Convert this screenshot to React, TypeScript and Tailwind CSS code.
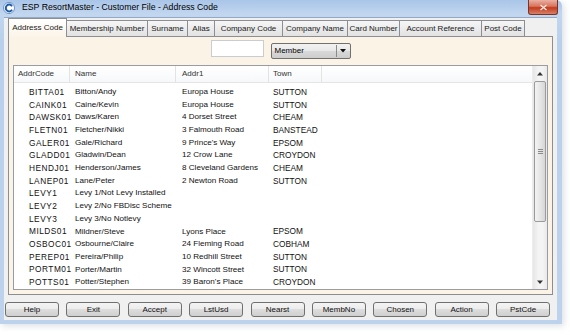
import React from "react";

const tabs: { label: string; w: number }[] = [
  { label: "Address Code", w: 59 },
  { label: "Membership Number", w: 81 },
  { label: "Surname", w: 40 },
  { label: "Alias", w: 27 },
  { label: "Company Code", w: 68 },
  { label: "Company Name", w: 65 },
  { label: "Card Number", w: 52 },
  { label: "Account Reference", w: 82 },
  { label: "Post Code", w: 43 },
];

const rows: [string, string, string, string][] = [
  ["BITTA01", "Bitton/Andy", "Europa House", "SUTTON"],
  ["CAINK01", "Caine/Kevin", "Europa House", "SUTTON"],
  ["DAWSK01", "Daws/Karen", "4 Dorset Street", "CHEAM"],
  ["FLETN01", "Fletcher/Nikki", "3 Falmouth Road", "BANSTEAD"],
  ["GALER01", "Gale/Richard", "9 Prince's Way", "EPSOM"],
  ["GLADD01", "Gladwin/Dean", "12 Crow Lane", "CROYDON"],
  ["HENDJ01", "Henderson/James", "8 Cleveland Gardens", "CHEAM"],
  ["LANEP01", "Lane/Peter", "2 Newton Road", "SUTTON"],
  ["LEVY1", "Levy 1/Not Levy Installed", "", ""],
  ["LEVY2", "Levy 2/No FBDisc Scheme", "", ""],
  ["LEVY3", "Levy 3/No Notlevy", "", ""],
  ["MILDS01", "Mildner/Steve", "Lyons Place", "EPSOM"],
  ["OSBOC01", "Osbourne/Claire", "24 Fleming Road", "COBHAM"],
  ["PEREP01", "Pereira/Philip", "10 Redhill Street", "SUTTON"],
  ["PORTM01", "Porter/Martin", "32 Wincott Street", "SUTTON"],
  ["POTTS01", "Potter/Stephen", "39 Baron's Place", "CROYDON"],
];

const buttons = ["Help", "Exit", "Accept", "LstUsd", "Nearst", "MembNo", "Chosen", "Action", "PstCde"];

function AppIcon() {
  return (
    <svg width="12" height="12" viewBox="0 0 12 12">
      <circle cx="6" cy="6" r="5.5" fill="#ffffff" stroke="#4f7fbf" strokeWidth="0.8" />
      <path d="M8.6 3.6 A3.4 3.4 0 1 0 8.6 8.4" fill="none" stroke="#1e5aa6" strokeWidth="2" strokeLinecap="round" />
    </svg>
  );
}

export default function App() {
  return (
    <div className="w-[570px] h-[335px] bg-white overflow-hidden font-['Liberation_Sans',Arial,sans-serif]">
      <div className="w-[562px] h-[324px] flex flex-col bg-[linear-gradient(to_bottom,#a9c5e8_0px,#c2d6ef_14px,#b9d0ec_40px,#bcd2ed_100%)] shadow-[2px_2px_6px_rgba(60,80,110,0.18)] rounded-tr-[6px]">
        {/* Title bar */}
        <div className="h-[17px] flex items-start shrink-0">
          <div className="mt-[2px] ml-[3px]">
            <AppIcon />
          </div>
          <div className="ml-[7px] h-[14px] leading-[14px] text-[8.7px] text-black whitespace-nowrap">
            ESP ResortMaster - Customer File - Address Code
          </div>
          <div className="ml-auto mr-[4px] w-[30px] h-[15px] rounded-b-[3px] border border-t-0 border-[#7a3326] bg-[linear-gradient(to_bottom,#eab0a3_0%,#d8735b_45%,#c33a1c_55%,#d6806a_100%)] flex items-center justify-center">
            <svg width="9" height="7" viewBox="0 0 9 7">
              <path d="M1.5 1 L7.5 6 M7.5 1 L1.5 6" stroke="#f8e8e4" strokeWidth="1.4" />
            </svg>
          </div>
        </div>

        {/* Body with frame */}
        <div className="flex-1 flex pl-[4px] pr-[5px] pb-[4px]">
          <div className="flex-1 flex flex-col bg-[#f0f0f0] border-t border-[#93a9c6]">
            {/* Tabs */}
            <div className="h-[18px] flex items-end pl-[4px] shrink-0">
              {tabs.map((t, i) => {
                const sel = i === 0;
                return (
                  <div
                    key={t.label}
                    style={{ width: t.w }}
                    className={
                      sel
                        ? "h-[19px] -mb-px relative z-10 border border-b-0 border-[#8c8e94] bg-[linear-gradient(to_bottom,#ffffff,#fbf4e8)] flex items-center justify-center text-[8px] text-[#1a1a1a] whitespace-nowrap"
                        : "h-[16px] border-t border-r border-[#8c8e94] bg-[linear-gradient(to_bottom,#f6f6f6,#e2e2e2)] flex items-center justify-center text-[8px] text-[#1a1a1a] whitespace-nowrap"
                    }
                  >
                    {t.label}
                  </div>
                );
              })}
            </div>

            {/* Panel */}
            <div className="mx-[4px] h-[259px] border border-[#8c8e94] bg-[#fbf3e5] flex flex-col shrink-0">
              <div className="pt-[3px] flex justify-center items-start gap-[7px] h-[22px]">
                <div className="w-[53px] h-[17px] bg-white border border-[#c9ccd3]" />
                <div className="mt-[3px] w-[80px] h-[16px] rounded-[2px] border border-[#707070] bg-[linear-gradient(to_bottom,#f2f2f2_0%,#e8e8e8_50%,#d9d9d9_50%,#cdcdcd_100%)] flex items-center">
                  <div className="flex-1 h-full pl-[3px] flex items-center text-[8px] text-black">Member</div>
                  <div className="w-px h-[12px] bg-[#8a8a8a]" />
                  <div className="w-[13px] flex items-center justify-center">
                    <svg width="6" height="4" viewBox="0 0 6 4">
                      <path d="M0 0 L6 0 L3 3.5 Z" fill="#111" />
                    </svg>
                  </div>
                </div>
              </div>

              {/* List */}
              <div className="mt-[6px] mx-[4px] h-[225px] border border-[#9a9ca3] bg-white flex overflow-hidden">
                <div className="flex-1 flex flex-col overflow-hidden">
                  <div className="h-[17px] shrink-0 flex border-b border-[#e5e5e5] bg-[linear-gradient(to_bottom,#ffffff,#f7f8fa)] text-[8px] text-[#333]">
                    <div className="w-[56px] pl-[4px] flex items-center border-r border-[#e3e3e3]">AddrCode</div>
                    <div className="w-[106px] pl-[5px] flex items-center border-r border-[#e3e3e3]">Name</div>
                    <div className="w-[93px] pl-[6px] flex items-center border-r border-[#e3e3e3]">Addr1</div>
                    <div className="w-[53px] pl-[4px] flex items-center border-r border-[#e3e3e3]">Town</div>
                    <div className="flex-1" />
                  </div>
                  <div className="pt-[2.7px] text-[8.1px] text-[#111]">
                    {rows.map((r) => (
                      <div key={r[0]} className="h-[12.7px] flex items-center whitespace-nowrap">
                        <div className="w-[56px] pl-[15px] tracking-[0.5px] text-[8.3px]">{r[0]}</div>
                        <div className="w-[106px] pl-[5px]">{r[1]}</div>
                        <div className="w-[93px] pl-[6px]">{r[2]}</div>
                        <div className="w-[53px] pl-[4px] text-[8.3px]">{r[3]}</div>
                      </div>
                    ))}
                  </div>
                </div>

                {/* Scrollbar */}
                <div className="w-[15px] flex flex-col bg-[linear-gradient(to_right,#e6e6e6,#f4f4f4_40%,#f4f4f4_70%,#e8e8e8)] border-l border-[#ececec]">
                  <div className="h-[15px] flex items-center justify-center">
                    <svg width="6" height="4" viewBox="0 0 6 4">
                      <path d="M0 3.5 L6 3.5 L3 0 Z" fill="#333" />
                    </svg>
                  </div>
                  <div className="mx-[1px] h-[141px] rounded-[2px] border border-[#9b9b9b] bg-[linear-gradient(to_right,#f3f3f3,#e6e6e6_50%,#d6d6d6)] flex items-center justify-center">
                    <div className="flex flex-col gap-[1px]">
                      <div className="w-[5px] h-px bg-[#8a8a8a]" />
                      <div className="w-[5px] h-px bg-[#8a8a8a]" />
                      <div className="w-[5px] h-px bg-[#8a8a8a]" />
                    </div>
                  </div>
                  <div className="flex-1" />
                  <div className="h-[15px] flex items-center justify-center">
                    <svg width="6" height="4" viewBox="0 0 6 4">
                      <path d="M0 0.5 L6 0.5 L3 4 Z" fill="#333" />
                    </svg>
                  </div>
                </div>
              </div>
            </div>

            {/* Buttons */}
            <div className="mt-[7px] pl-[1px] pr-[7px] flex justify-between shrink-0">
              {buttons.map((b) => (
                <div
                  key={b}
                  className="w-[54px] h-[15px] rounded-[3px] border border-[#707070] bg-[linear-gradient(to_bottom,#f4f4f4_0%,#ebebeb_50%,#dddddd_50%,#cfcfcf_100%)] flex items-center justify-center text-[8px] text-[#111]"
                >
                  {b}
                </div>
              ))}
            </div>
          </div>
        </div>
      </div>
    </div>
  );
}
